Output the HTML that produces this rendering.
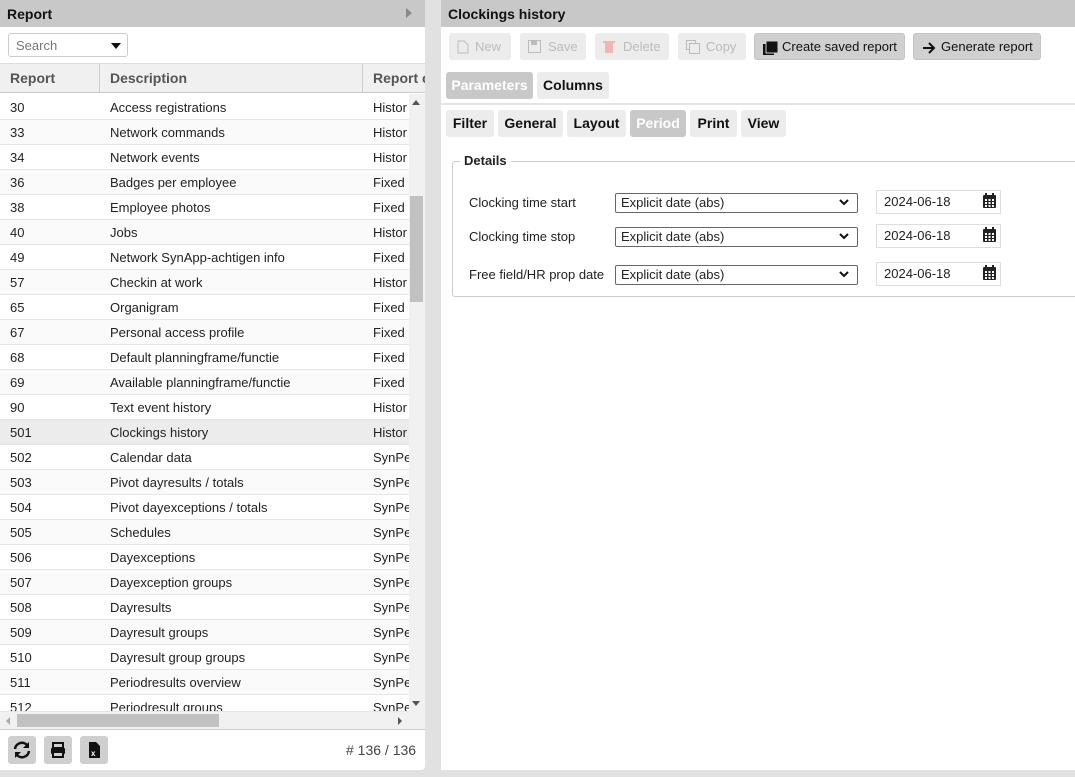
<!DOCTYPE html>
<html><head><style>
*{box-sizing:border-box;margin:0;padding:0}
body{width:1075px;height:777px;background:#e1e1e1;font-family:"Liberation Sans",Arial,sans-serif;font-size:13px;color:#222;position:relative;overflow:hidden}
.abs{position:absolute}
.lp{left:0;top:0;width:425px;height:770px;background:#fff;border-radius:0 0 4px 0}
.hd{height:27px;background:#c8c8c8;font-weight:bold;font-size:14px;padding:6px 7px;color:#111}
.rp{left:441px;top:0;width:634px;height:770px;background:#fff}
.row{position:absolute;left:0;width:409px;height:25px;border-bottom:1px solid #e6e6e6;font-size:13px;line-height:25px}
.row span{position:absolute}
.btn{position:absolute;height:27px;border-radius:3px;background:#ececec;font-size:13px;line-height:27px;color:#bbb;white-space:nowrap}
.btn svg{position:absolute;left:8px;top:7px}
.btn b{position:absolute;font-weight:normal}
.tab{position:absolute;height:27px;border-radius:3px;background:#ececec;font-weight:bold;font-size:14px;line-height:27px;text-align:center;color:#111}
.sel{position:absolute;left:615px;width:243px;height:20px;border:1px solid #666;border-radius:2px;font-size:13px;line-height:18px;padding-left:5px;background:#fff}
.date{position:absolute;left:876px;width:125px;height:24px;border:1px solid #ddd;font-size:13px;line-height:22px;padding-left:7px}
.lbl{position:absolute;left:469px;font-size:13px}
</style></head><body>
<div class="abs lp">
 <div class="hd">Report<span style="position:absolute;left:406px;top:8px;border-left:6px solid #888;border-top:5px solid transparent;border-bottom:5px solid transparent"></span></div>
 <div class="abs" style="left:8px;top:33px;width:120px;height:24px;border:1px solid #ccc;border-radius:3px;color:#777;padding:4px 7px;font-size:13px">Search<span style="position:absolute;right:6px;top:9px;border-top:6px solid #111;border-left:5px solid transparent;border-right:5px solid transparent"></span></div>
 <div class="abs" style="left:0;top:63px;width:425px;height:30px;background:#f0f0f0;border-top:1px solid #ddd;border-bottom:1px solid #ccc;font-weight:bold;color:#555;font-size:14px;line-height:28px">
  <span class="abs" style="left:10px">Report</span><span class="abs" style="left:99px;top:0;height:28px;border-left:1px solid #ccc"></span>
  <span class="abs" style="left:110px">Description</span><span class="abs" style="left:362px;top:0;height:28px;border-left:1px solid #ccc"></span>
  <span class="abs" style="left:373px;width:52px;overflow:hidden;white-space:nowrap">Report c</span>
 </div>
 <div id="rows"></div>
 <div class="abs" style="left:409px;top:94px;width:16px;height:618px;background:#f1f1f1"></div>
 <div class="abs" style="left:410px;top:196px;width:13px;height:106px;background:#c1c1c1"></div>
 <div class="abs" style="left:412px;top:100px;border-bottom:5px solid #555;border-left:4px solid transparent;border-right:4px solid transparent"></div>
 <div class="abs" style="left:412px;top:701px;border-top:5px solid #555;border-left:4px solid transparent;border-right:4px solid transparent"></div>
 <div class="abs" style="left:0;top:712px;width:425px;height:17px;background:#f1f1f1"></div>
 <div class="abs" style="left:17px;top:714px;width:202px;height:13px;background:#c1c1c1"></div>
 <div class="abs" style="left:6px;top:717px;border-right:4px solid #aaa;border-top:4px solid transparent;border-bottom:4px solid transparent"></div>
 <div class="abs" style="left:398px;top:717px;border-left:4px solid #555;border-top:4px solid transparent;border-bottom:4px solid transparent"></div>
 <div class="abs" style="left:0;top:729px;width:425px;border-top:1px solid #ccc"></div>
 <div class="abs" style="left:8px;top:736px;width:28px;height:28px;background:#cfcfcf;border-radius:3px"><svg width="28" height="28"><path d="M7 13a7 7 0 0 1 12.5-3.5" stroke="#111" stroke-width="2.5" fill="none"/><path d="M21 6v6h-6z" fill="#111"/><path d="M21 15a7 7 0 0 1-12.5 3.5" stroke="#111" stroke-width="2.5" fill="none"/><path d="M7 22v-6h6z" fill="#111"/></svg></div>
 <div class="abs" style="left:44px;top:736px;width:28px;height:28px;background:#cfcfcf;border-radius:3px"><svg width="28" height="28"><rect x="9" y="7" width="10" height="5" fill="none" stroke="#111" stroke-width="2"/><rect x="7" y="12" width="14" height="6" rx="1" fill="#111"/><rect x="9" y="16" width="10" height="5" fill="#cfcfcf" stroke="#111" stroke-width="2"/></svg></div>
 <div class="abs" style="left:80px;top:736px;width:28px;height:28px;background:#cfcfcf;border-radius:3px"><svg width="28" height="28"><path d="M9 6h7l4 4v12H9z" fill="#111"/><text x="11" y="20" font-size="8" fill="#fff" font-family="Liberation Sans" font-weight="bold">x</text></svg></div>
 <div class="abs" style="left:346px;top:742px;font-size:14px;color:#444">#&nbsp;136 / 136</div>
</div>
<div class="abs rp">
 <div class="hd">Clockings history</div>
</div>
<div class="btn" style="left:449px;top:33px;width:62px"><svg width="12" height="14"><path d="M1 1h6l4 4v8H1z" fill="none" stroke="#bbb"/></svg><b style="left:26px">New</b></div>
<div class="btn" style="left:520px;top:33px;width:66px"><svg width="13" height="13"><rect x="0.5" y="0.5" width="12" height="12" fill="none" stroke="#bbb"/><rect x="3" y="1" width="6" height="4" fill="#bbb"/></svg><b style="left:28px">Save</b></div>
<div class="btn" style="left:595px;top:33px;width:74px"><svg width="12" height="14"><rect x="2" y="3" width="8" height="10" fill="#f4b4b4"/><rect x="0" y="1" width="12" height="2" fill="#f4b4b4"/></svg><b style="left:28px">Delete</b></div>
<div class="btn" style="left:678px;top:33px;width:68px"><svg width="14" height="14"><rect x="0.5" y="0.5" width="9" height="9" fill="none" stroke="#bbb"/><rect x="3.5" y="3.5" width="10" height="10" fill="#ececec" stroke="#bbb"/></svg><b style="left:28px">Copy</b></div>
<div class="btn" style="left:754px;top:33px;width:151px;background:#d0d0d0;color:#111;border:1px solid #c4c4c4"><svg width="16" height="14"><rect x="0" y="3" width="11" height="11" fill="#111"/><rect x="3" y="0" width="12" height="12" fill="#111" stroke="#d0d0d0"/></svg><b style="left:27px;top:-1px">Create saved report</b></div>
<div class="btn" style="left:913px;top:33px;width:128px;background:#d0d0d0;color:#111;border:1px solid #c4c4c4"><svg width="14" height="14"><path d="M1 7h11M7 2l5 5-5 5" stroke="#111" stroke-width="2" fill="none"/></svg><b style="left:27px;top:-1px">Generate report</b></div>
<div class="tab" style="left:446px;top:72px;width:87px;background:#c8c8c8;color:#fff">Parameters</div>
<div class="tab" style="left:537px;top:72px;width:72px">Columns</div>
<div class="abs" style="left:441px;top:103px;width:634px;border-top:2px solid #e4e4e4"></div>
<div class="tab" style="left:446px;top:110px;width:48px">Filter</div>
<div class="tab" style="left:498px;top:110px;width:65px">General</div>
<div class="tab" style="left:567px;top:110px;width:59px">Layout</div>
<div class="tab" style="left:630px;top:110px;width:56px;background:#c8c8c8;color:#fff">Period</div>
<div class="tab" style="left:690px;top:110px;width:47px">Print</div>
<div class="tab" style="left:741px;top:110px;width:45px">View</div>
<div class="abs" style="left:452px;top:161px;width:640px;height:136px;border:1px solid #ccc;border-radius:3px"></div>
<div class="abs" style="left:460px;top:153px;background:#fff;padding:0 4px;font-weight:bold;font-size:13px">Details</div>
<div class="lbl" style="top:195px">Clocking time start</div>
<div class="lbl" style="top:229px">Clocking time stop</div>
<div class="lbl" style="top:267px">Free field/HR prop date</div>
<div class="sel" style="top:193px">Explicit date (abs)</div>
<div class="sel" style="top:227px">Explicit date (abs)</div>
<div class="sel" style="top:265px">Explicit date (abs)</div>
<div class="date" style="top:190px">2024-06-18</div>
<div class="date" style="top:224px">2024-06-18</div>
<div class="date" style="top:262px">2024-06-18</div>
<svg class="abs" style="left:0;top:0" width="1075" height="300" pointer-events="none">
<g id="ic"></g>
</svg>
<script>
var d=[["30","Access registrations","Histor"],["33","Network commands","Histor"],["34","Network events","Histor"],["36","Badges per employee","Fixed"],["38","Employee photos","Fixed"],["40","Jobs","Histor"],["49","Network SynApp-achtigen info","Fixed"],["57","Checkin at work","Histor"],["65","Organigram","Fixed"],["67","Personal access profile","Fixed"],["68","Default planningframe/functie","Fixed"],["69","Available planningframe/functie","Fixed"],["90","Text event history","Histor"],["501","Clockings history","Histor"],["502","Calendar data","SynPe"],["503","Pivot dayresults / totals","SynPe"],["504","Pivot dayexceptions / totals","SynPe"],["505","Schedules","SynPe"],["506","Dayexceptions","SynPe"],["507","Dayexception groups","SynPe"],["508","Dayresults","SynPe"],["509","Dayresult groups","SynPe"],["510","Dayresult group groups","SynPe"],["511","Periodresults overview","SynPe"],["512","Periodresult groups","SynPe"]];
var h="";d.forEach(function(r,i){var y=95+i*25;var bg=r[0]=="501"?"#ececec":(i%2?"#fafafa":"#fff");var ht=i==24?17:25;h+='<div class="row" style="top:'+y+'px;height:'+ht+'px;overflow:hidden;background:'+bg+'"><span style="left:10px">'+r[0]+'</span><span style="left:110px">'+r[1]+'</span><span style="left:373px;width:36px;overflow:hidden;white-space:nowrap">'+r[2]+'</span></div>';});
document.getElementById("rows").innerHTML=h;
var s="";[193,227,265].forEach(function(y){s+='<path d="M840 '+(y+7)+'l4 4 4-4" stroke="#111" stroke-width="2" fill="none"/>';s+='<rect x="983" y="'+(y+2)+'" width="13" height="13" rx="1" fill="#222"/><rect x="985" y="'+y+'" width="2" height="4" fill="#222"/><rect x="992" y="'+y+'" width="2" height="4" fill="#222"/>';for(var a=0;a<3;a++)for(var b=0;b<3;b++)s+='<rect x="'+(985+a*3.5)+'" y="'+(y+6+b*3)+'" width="2" height="2" fill="#fff"/>';});
document.getElementById("ic").innerHTML=s;
</script>
</body></html>
